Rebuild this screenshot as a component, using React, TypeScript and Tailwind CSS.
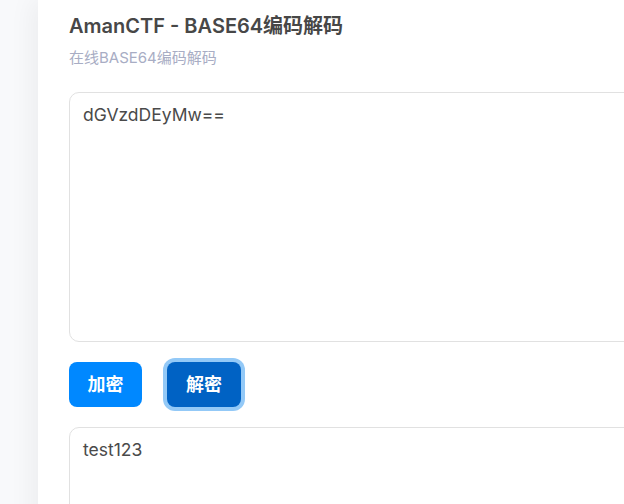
import React, { useState } from 'react'

const FONT = "font-['Inter','Noto_Sans_CJK_SC',sans-serif]"

export default function App() {
  const [input, setInput] = useState('dGVzdDEyMw==')
  const [output, setOutput] = useState('test123')

  const encode = () => {
    try {
      setOutput(btoa(unescape(encodeURIComponent(input))))
    } catch {
      setOutput('')
    }
  }
  const decode = () => {
    try {
      setOutput(decodeURIComponent(escape(atob(input))))
    } catch {
      setOutput('')
    }
  }

  return (
    <div className={`h-[504px] w-[624px] overflow-hidden bg-[#f8f9fb] ${FONT}`}>
      <div className="ml-[38px] min-h-[504px] w-[700px] bg-white pt-[12px] pl-[31px] shadow-[-6px_0_24px_rgba(0,0,0,0.05)]">
        <h1 className="text-[20px] leading-[28px] font-semibold text-[#474747]">
          AmanCTF - BASE64编码解码
        </h1>
        <p className="mt-[8px] text-[15px] leading-[20px] text-[#a8adc4]">
          在线BASE64编码解码
        </p>
        <textarea
          value={input}
          onChange={(e) => setInput(e.target.value)}
          className="mt-[24px] block h-[250px] w-[640px] resize-none rounded-[10px] border border-[#e1e1e1] px-[13px] py-[9px] text-[17.5px] leading-[26px] text-[#4a4a4a] outline-none"
        />
        <div className="mt-[20px] flex items-center gap-[25px]">
          <button
            onClick={encode}
            className="h-[45px] w-[73px] rounded-[8px] bg-[#0088ff] text-[18px] font-bold text-white"
          >
            加密
          </button>
          <button
            onClick={decode}
            className="h-[45px] w-[74px] rounded-[8px] bg-[#0062c4] text-[18px] font-bold text-white ring-4 ring-[#93c9f7]"
          >
            解密
          </button>
        </div>
        <textarea
          value={output}
          readOnly
          className="mt-[20px] block h-[250px] w-[640px] resize-none rounded-[10px] border border-[#e1e1e1] px-[13px] py-[9px] text-[17.5px] leading-[26px] text-[#4a4a4a] outline-none"
        />
      </div>
    </div>
  )
}
